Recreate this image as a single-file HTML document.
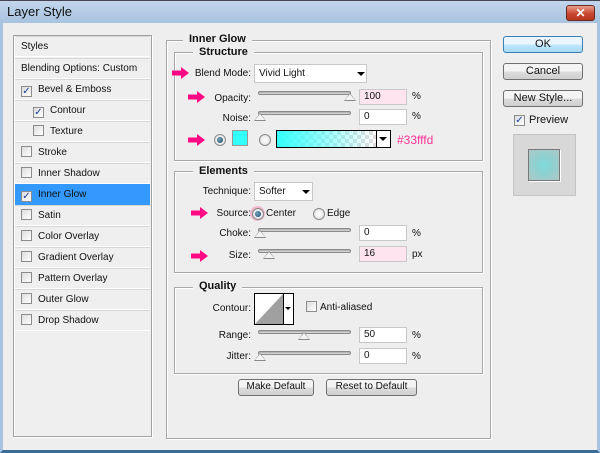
<!DOCTYPE html>
<html><head><style>
*{box-sizing:border-box;margin:0;padding:0}
body{width:600px;height:453px;overflow:hidden;background:#eeeeee;font-family:"Liberation Sans",sans-serif;font-size:10px;color:#111;position:relative}
.a{position:absolute}
.title{left:0;top:0;width:600px;height:23px;background:linear-gradient(#c2d6ec,#a8c3e0);border-top:1px solid #445}
.frame{left:0;top:23px;width:600px;height:430px;border-left:3px solid #a8c3e0;border-right:3px solid #a8c3e0;border-bottom:3px solid #3a6e99}
.panel{border:1px solid #a0a0a0;box-shadow:inset 1px 1px 0 #fff, 1px 1px 0 #fff}
.row{position:absolute;left:15px;width:135px;height:21px;border-bottom:1px solid #fff;border-top:1px solid #d8d8d8;padding-left:6px;line-height:19px;font-size:10px}
.cb{display:inline-block;width:11px;height:11px;border:1px solid #8c8c8c;background:linear-gradient(135deg,#dcdcdc,#fff);vertical-align:-2px;margin-right:6px;position:relative;font-size:10px;line-height:9px;text-align:center;color:#1a3c9c}
.fs{border:1px solid #a8a8a8;box-shadow:1px 1px 0 #fff inset,1px 1px 0 #fff}
.leg{background:#eeeeee;font-weight:bold;font-size:11px;padding:0 6px}
.lbl{font-size:10px;text-align:right}
.track{height:4px;border:1px solid #8a8a8a;border-radius:2px;background:linear-gradient(#aaa,#ddd);width:93px}
.thumb{width:0;height:0;border-left:6px solid transparent;border-right:6px solid transparent;border-bottom:8px solid #888}
.thumb:after{content:"";position:absolute;left:-5px;top:1px;border-left:5px solid transparent;border-right:5px solid transparent;border-bottom:6px solid #f4f4f4}
.inp{width:48px;height:16px;background:#fff;border:1px solid #c8c8c8;padding-left:4px;line-height:14px;font-size:10px}
.pink{background:#fde4ee}
.btn{border:1px solid #707070;border-radius:3px;background:linear-gradient(#f4f4f4 45%,#dcdcdc 55%,#cfcfcf);text-align:center;font-size:11px;line-height:14px}
.radio{width:12px;height:12px;border-radius:50%;border:1px solid #888;background:radial-gradient(#fff,#ddd)}
.radio.on:after{content:"";position:absolute;left:2px;top:2px;width:6px;height:6px;border-radius:50%;background:radial-gradient(circle at 40% 40%,#7ab,#0a3a6a)}
.sel{background:#fff;border:1px solid #c8c8c8;font-size:10px;padding-left:4px;line-height:17px}
.tri{position:absolute;width:0;height:0;border-left:4px solid transparent;border-right:4px solid transparent;border-top:4px solid #000}
</style></head><body>
<div class="a title"></div>
<div class="a" style="left:7px;top:4px;font-size:13px;color:#111">Layer Style</div>
<div class="a" style="left:566px;top:5px;width:29px;height:16px;border:1px solid #6a2a20;border-radius:3px;background:linear-gradient(#e8a090,#c9462e 55%,#b83520);color:#fff;font-size:12px;font-weight:bold;text-align:center;line-height:14px">✕</div>
<div class="a frame"></div>

<div class="a panel" style="left:13px;top:35px;width:139px;height:402px;background:#efefef"></div>
<div class="row" style="top:36px">Styles</div>
<div class="row" style="top:58px">Blending Options: Custom</div>
<div class="row" style="top:79px"><span class="cb">✓</span>Bevel &amp; Emboss</div>
<div class="row" style="top:100px;padding-left:18px"><span class="cb">✓</span>Contour</div>
<div class="row" style="top:121px;padding-left:18px"><span class="cb"></span>Texture</div>
<div class="row" style="top:142px"><span class="cb"></span>Stroke</div>
<div class="row" style="top:163px"><span class="cb"></span>Inner Shadow</div>
<div class="row" style="top:184px;background:#3399ff;border-color:#3399ff"><span class="cb">✓</span>Inner Glow</div>
<div class="row" style="top:205px"><span class="cb"></span>Satin</div>
<div class="row" style="top:226px"><span class="cb"></span>Color Overlay</div>
<div class="row" style="top:247px"><span class="cb"></span>Gradient Overlay</div>
<div class="row" style="top:268px"><span class="cb"></span>Pattern Overlay</div>
<div class="row" style="top:289px"><span class="cb"></span>Outer Glow</div>
<div class="row" style="top:310px"><span class="cb"></span>Drop Shadow</div>

<div class="a fs" style="left:166px;top:40px;width:325px;height:399px"></div>
<div class="a leg" style="left:183px;top:33px">Inner Glow</div>
<div class="a fs" style="left:174px;top:52px;width:309px;height:109px"></div>
<div class="a leg" style="left:193px;top:46px">Structure</div>

<svg class="a" style="left:172px;top:67px" width="18" height="12"><path d="M0 3.5H9V0L17 6L9 12V8.5H0Z" fill="#ff0a84"/></svg>
<svg class="a" style="left:188px;top:91px" width="18" height="12"><path d="M0 3.5H9V0L17 6L9 12V8.5H0Z" fill="#ff0a84"/></svg>
<svg class="a" style="left:188px;top:134px" width="18" height="12"><path d="M0 3.5H9V0L17 6L9 12V8.5H0Z" fill="#ff0a84"/></svg>
<svg class="a" style="left:191px;top:207px" width="18" height="12"><path d="M0 3.5H9V0L17 6L9 12V8.5H0Z" fill="#ff0a84"/></svg>
<svg class="a" style="left:191px;top:250px" width="18" height="12"><path d="M0 3.5H9V0L17 6L9 12V8.5H0Z" fill="#ff0a84"/></svg>

<div class="a lbl" style="left:190px;top:68px;width:61px">Blend Mode:</div>
<div class="a sel pink" style="left:254px;top:64px;width:113px;height:19px">Vivid Light</div>
<div class="tri" style="left:357px;top:72px"></div>

<div class="a lbl" style="left:200px;top:93px;width:51px">Opacity:</div>
<div class="a track" style="left:258px;top:91px"></div>
<div class="a thumb" style="left:344px;top:93px"></div>
<div class="a inp pink" style="left:359px;top:89px">100</div>
<div class="a" style="left:412px;top:91px">%</div>

<div class="a lbl" style="left:200px;top:113px;width:51px">Noise:</div>
<div class="a track" style="left:258px;top:111px"></div>
<div class="a thumb" style="left:254px;top:113px"></div>
<div class="a inp" style="left:359px;top:109px">0</div>
<div class="a" style="left:412px;top:111px">%</div>

<div class="a radio on" style="left:214px;top:134px"></div>
<div class="a" style="left:232px;top:130px;width:16px;height:16px;background:#33fffd;border:1px solid #999"></div>
<div class="a radio" style="left:259px;top:134px"></div>
<div class="a" style="left:276px;top:130px;width:115px;height:18px;border:1px solid #000;background:linear-gradient(90deg,#33fffd,rgba(51,255,253,0) 85%),repeating-conic-gradient(#ddd 0 25%,#fff 0 50%) 0 0/8px 8px"></div>
<div class="a" style="left:376px;top:131px;width:14px;height:16px;background:#fff;border-left:1px solid #000"></div>
<div class="tri" style="left:379px;top:137px"></div>
<div class="a" style="left:397px;top:133px;font-size:12px;color:#ff3399">#33fffd</div>

<div class="a fs" style="left:174px;top:171px;width:309px;height:102px"></div>
<div class="a leg" style="left:193px;top:165px">Elements</div>
<div class="a lbl" style="left:190px;top:186px;width:61px">Technique:</div>
<div class="a sel" style="left:254px;top:182px;width:59px;height:19px">Softer</div>
<div class="tri" style="left:302px;top:190px"></div>
<div class="a lbl" style="left:200px;top:208px;width:51px">Source:</div>
<div class="a" style="left:250px;top:206px;width:15px;height:15px;border-radius:50%;background:#f0b8d0"></div>
<div class="a radio on" style="left:252px;top:208px"></div>
<div class="a" style="left:266px;top:208px">Center</div>
<div class="a radio" style="left:313px;top:208px"></div>
<div class="a" style="left:327px;top:208px">Edge</div>

<div class="a lbl" style="left:200px;top:228px;width:51px">Choke:</div>
<div class="a track" style="left:258px;top:228px"></div>
<div class="a thumb" style="left:254px;top:230px"></div>
<div class="a inp" style="left:359px;top:225px">0</div>
<div class="a" style="left:412px;top:228px">%</div>
<div class="a lbl" style="left:200px;top:250px;width:51px">Size:</div>
<div class="a track" style="left:258px;top:249px"></div>
<div class="a thumb" style="left:263px;top:251px"></div>
<div class="a inp pink" style="left:359px;top:246px">16</div>
<div class="a" style="left:412px;top:249px">px</div>

<div class="a fs" style="left:174px;top:287px;width:309px;height:87px"></div>
<div class="a leg" style="left:193px;top:280px">Quality</div>
<div class="a lbl" style="left:190px;top:303px;width:61px">Contour:</div>
<div class="a" style="left:254px;top:293px;width:40px;height:32px;border:1px solid #000;background:#fff"></div>
<svg class="a" style="left:255px;top:294px" width="28" height="30"><path d="M0 30L28 0V30Z" fill="#a0a0a0"/></svg>
<div class="a" style="left:283px;top:294px;width:10px;height:30px;border-left:1px solid #000;background:#fff"></div>
<div class="a" style="left:285px;top:307px;border-left:3px solid transparent;border-right:3px solid transparent;border-top:3px solid #000;width:0"></div>
<div class="cb" style="position:absolute;left:306px;top:301px"></div>
<div class="a" style="left:320px;top:302px">Anti-aliased</div>

<div class="a lbl" style="left:200px;top:330px;width:51px">Range:</div>
<div class="a track" style="left:258px;top:330px"></div>
<div class="a thumb" style="left:298px;top:332px"></div>
<div class="a inp" style="left:359px;top:327px">50</div>
<div class="a" style="left:412px;top:330px">%</div>
<div class="a lbl" style="left:200px;top:351px;width:51px">Jitter:</div>
<div class="a track" style="left:258px;top:351px"></div>
<div class="a thumb" style="left:254px;top:353px"></div>
<div class="a inp" style="left:359px;top:348px">0</div>
<div class="a" style="left:412px;top:351px">%</div>

<div class="a btn" style="left:238px;top:379px;width:76px;height:17px;font-size:10px">Make Default</div>
<div class="a btn" style="left:326px;top:379px;width:91px;height:17px;font-size:10px">Reset to Default</div>

<div class="a btn" style="left:503px;top:36px;width:80px;height:17px;border-color:#3c7fb1;background:linear-gradient(#eaf6fd 45%,#bee6fd 55%,#a7d9f5)">OK</div>
<div class="a btn" style="left:503px;top:63px;width:80px;height:17px">Cancel</div>
<div class="a btn" style="left:503px;top:90px;width:80px;height:17px">New Style...</div>
<div class="cb" style="position:absolute;left:514px;top:115px">✓</div>
<div class="a" style="left:529px;top:114px;font-size:11px">Preview</div>
<div class="a" style="left:513px;top:134px;width:63px;height:62px;background:#d8d8d8;border:1px solid #c4c4c4"></div>
<div class="a" style="left:528px;top:149px;width:32px;height:32px;border:1px solid #777;background:radial-gradient(circle,#7ddcdc 0,#8fd0d0 40%,#b0c8c8 100%);box-shadow:1px 1px 0 #fff"></div>
</body></html>
